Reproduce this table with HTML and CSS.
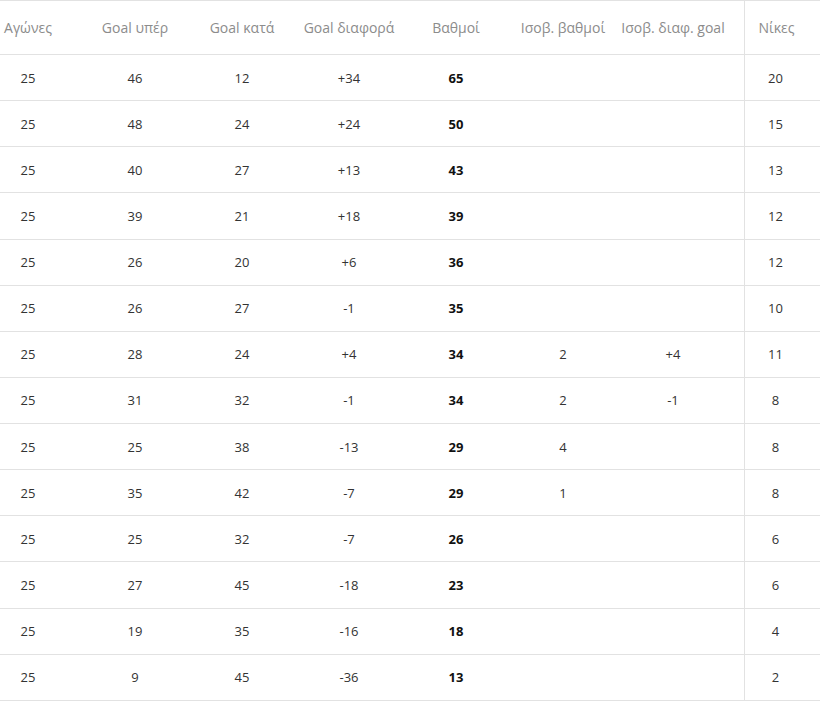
FILE: index.html
```html
<!DOCTYPE html>
<html lang="el">
<head>
<meta charset="utf-8">
<title>Βαθμολογία</title>
<link rel="stylesheet" href="styles.css">
</head>
<body>
<div class="table">
  <div class="row head">
    <div class="c">Αγώνες</div>
    <div class="c">Goal υπέρ</div>
    <div class="c">Goal κατά</div>
    <div class="c">Goal διαφορά</div>
    <div class="c">Βαθμοί</div>
    <div class="c">Ισοβ. βαθμοί</div>
    <div class="c c7">Ισοβ. διαφ. goal</div>
    <div class="c c8">Νίκες</div>
    <div class="c"></div>
  </div>
  <div class="row"><div class="c">25</div><div class="c">46</div><div class="c">12</div><div class="c">+34</div><div class="c pts">65</div><div class="c"></div><div class="c c7"></div><div class="c c8">20</div><div class="c"></div></div>
  <div class="row"><div class="c">25</div><div class="c">48</div><div class="c">24</div><div class="c">+24</div><div class="c pts">50</div><div class="c"></div><div class="c c7"></div><div class="c c8">15</div><div class="c"></div></div>
  <div class="row"><div class="c">25</div><div class="c">40</div><div class="c">27</div><div class="c">+13</div><div class="c pts">43</div><div class="c"></div><div class="c c7"></div><div class="c c8">13</div><div class="c"></div></div>
  <div class="row"><div class="c">25</div><div class="c">39</div><div class="c">21</div><div class="c">+18</div><div class="c pts">39</div><div class="c"></div><div class="c c7"></div><div class="c c8">12</div><div class="c"></div></div>
  <div class="row"><div class="c">25</div><div class="c">26</div><div class="c">20</div><div class="c">+6</div><div class="c pts">36</div><div class="c"></div><div class="c c7"></div><div class="c c8">12</div><div class="c"></div></div>
  <div class="row"><div class="c">25</div><div class="c">26</div><div class="c">27</div><div class="c">-1</div><div class="c pts">35</div><div class="c"></div><div class="c c7"></div><div class="c c8">10</div><div class="c"></div></div>
  <div class="row"><div class="c">25</div><div class="c">28</div><div class="c">24</div><div class="c">+4</div><div class="c pts">34</div><div class="c">2</div><div class="c c7">+4</div><div class="c c8">11</div><div class="c"></div></div>
  <div class="row"><div class="c">25</div><div class="c">31</div><div class="c">32</div><div class="c">-1</div><div class="c pts">34</div><div class="c">2</div><div class="c c7">-1</div><div class="c c8">8</div><div class="c"></div></div>
  <div class="row"><div class="c">25</div><div class="c">25</div><div class="c">38</div><div class="c">-13</div><div class="c pts">29</div><div class="c">4</div><div class="c c7"></div><div class="c c8">8</div><div class="c"></div></div>
  <div class="row"><div class="c">25</div><div class="c">35</div><div class="c">42</div><div class="c">-7</div><div class="c pts">29</div><div class="c">1</div><div class="c c7"></div><div class="c c8">8</div><div class="c"></div></div>
  <div class="row"><div class="c">25</div><div class="c">25</div><div class="c">32</div><div class="c">-7</div><div class="c pts">26</div><div class="c"></div><div class="c c7"></div><div class="c c8">6</div><div class="c"></div></div>
  <div class="row"><div class="c">25</div><div class="c">27</div><div class="c">45</div><div class="c">-18</div><div class="c pts">23</div><div class="c"></div><div class="c c7"></div><div class="c c8">6</div><div class="c"></div></div>
  <div class="row"><div class="c">25</div><div class="c">19</div><div class="c">35</div><div class="c">-16</div><div class="c pts">18</div><div class="c"></div><div class="c c7"></div><div class="c c8">4</div><div class="c"></div></div>
  <div class="row"><div class="c">25</div><div class="c">9</div><div class="c">45</div><div class="c">-36</div><div class="c pts">13</div><div class="c"></div><div class="c c7"></div><div class="c c8">2</div><div class="c"></div></div>
</div>
</body>
</html>
```
FILE: styles.css
```css
html, body {
  margin: 0;
  padding: 0;
  background: #ffffff;
  overflow: hidden;
}
body {
  font-family: "Open Sans", "DejaVu Sans", sans-serif;
  font-size: 13px;
  color: #333333;
}
.table {
  margin-left: -25.5px;
  width: calc(100% + 25.5px);
}
.row {
  display: grid;
  grid-template-columns: repeat(6, 107px) 127.5px 62px 1fr;
  height: 46.14px;
  box-sizing: border-box;
  border-bottom: 1px solid #e2e2e2;
}
.row.head {
  height: 55px;
  border-top: 1px solid #e2e2e2;
  color: #8c8c8c;
  font-size: 14px;
}
.c {
  display: flex;
  align-items: center;
  justify-content: center;
  white-space: nowrap;
}
.c7 {
  padding-right: 14.5px;
}
.c8 {
  border-left: 1px solid #e2e2e2;
}
.head .c8 {
  padding-left: 2px;
}
.pts {
  font-weight: 700;
  color: #111111;
}
```
